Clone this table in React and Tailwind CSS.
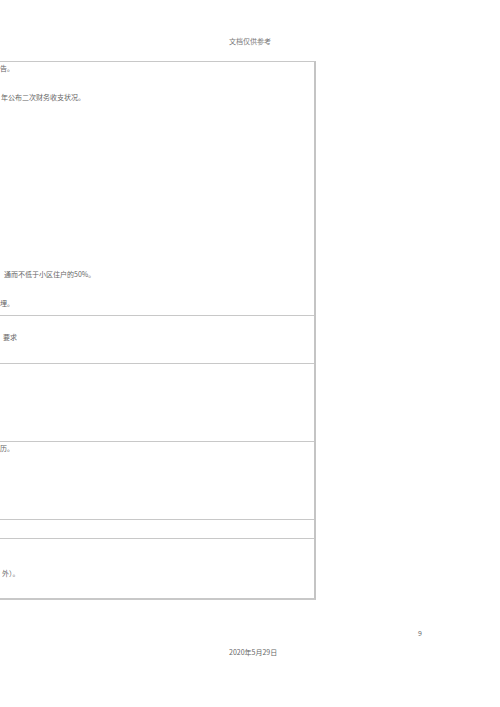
import React from 'react';

const font = { fontFamily: '"Noto Sans CJK SC", "Noto Sans", sans-serif' };

const Line = ({ children, className = '' }) => (
  <p className={`h-[10px] text-[7px] leading-[10px] text-[#666] whitespace-nowrap ${className}`}>{children}</p>
);

export default function App() {
  return (
    <div className="w-[500px] h-[707px] bg-white flex flex-col overflow-hidden" style={font}>
      {/* Header */}
      <div className="pt-[36px] h-[61px] pl-[229px]">
        <Line className="text-[#777]">文档仅供参考</Line>
      </div>

      {/* Table (cut off at the left edge) */}
      <div className="w-[316px] border-t border-r-2 border-b-2 border-t-[#c8c8c8] border-r-[#c4c4c4] border-b-[#c8c8c8]">
        <div className="h-[254px] pt-[1px] border-b border-[#c8c8c8]">
          <Line>告。</Line>
          <Line className="mt-[19px] pl-[1px]">年公布二次财务收支状况。</Line>
          <Line className="mt-[167px] pl-[4px]">通而不低于小区住户的50%。</Line>
          <Line className="mt-[19px]">埋。</Line>
        </div>
        <div className="h-[48px] pt-[16px] border-b border-[#c8c8c8]">
          <Line className="pl-[3px]">要求</Line>
        </div>
        <div className="h-[78px] border-b border-[#c8c8c8]" />
        <div className="h-[78px] pt-[1px] border-b border-[#c8c8c8]">
          <Line>历。</Line>
        </div>
        <div className="h-[19px] border-b border-[#c8c8c8]" />
        <div className="h-[59px] pt-[29px]">
          <Line className="pl-[2px]">外）。</Line>
        </div>
      </div>

      {/* Footer */}
      <div className="mt-[28px] pl-[418px]">
        <Line>9</Line>
      </div>
      <div className="mt-[9px] pl-[229px]">
        <Line className="text-[#555]">2020年5月29日</Line>
      </div>
    </div>
  );
}
